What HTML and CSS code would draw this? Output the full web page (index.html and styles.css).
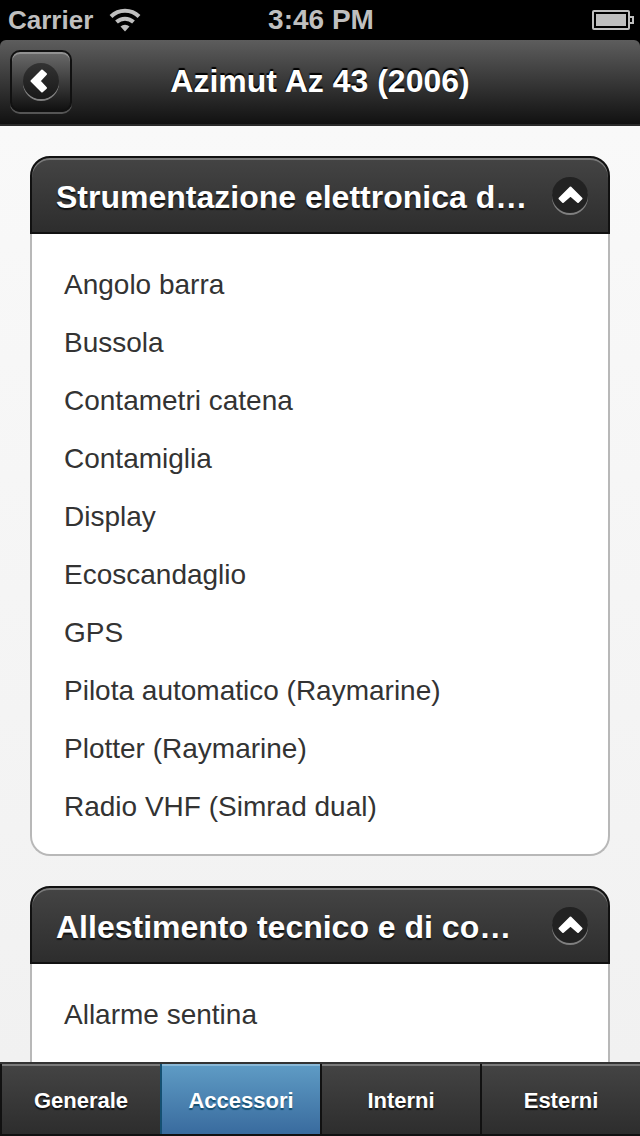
FILE: index.html
```html
<!DOCTYPE html>
<html lang="it">

<head>
    <meta charset="UTF-8">
    <meta name="viewport" content="width=device-width, initial-scale=1.0">
    <title>Azimut Az 43 (2006)</title>
    <link rel="stylesheet" href="styles.css">
</head>

<body>
    <div class="status-bar">
        <div class="status-left">
            <span class="carrier">Carrier</span>
            <svg class="wifi" width="32" height="24" viewBox="0 0 32 24" aria-hidden="true">
                <g fill="none" stroke="#bfbfbf" stroke-width="4">
                    <path d="M2 8.500 A20 20 0 0 1 30 8.500" />
                    <path d="M7.500 14 A12.500 12.500 0 0 1 24.500 14" />
                </g>
                <path d="M11.500 18.500 A6.500 6.500 0 0 1 20.500 18.500 L16 23.500 Z" fill="#bfbfbf" />
            </svg>
        </div>
        <span class="clock">3:46 PM</span>
        <div class="status-right">
            <svg width="42" height="20" viewBox="0 0 42 20" aria-hidden="true">
                <rect x="1" y="1" width="36" height="18" rx="1" fill="none" stroke="#bfbfbf" stroke-width="2" />
                <rect x="4" y="4" width="30" height="12" fill="#bfbfbf" />
                <path d="M38 7 H41 V13 H38" fill="none" stroke="#bfbfbf" stroke-width="2" />
            </svg>
        </div>
    </div>

    <header class="page-header">
        <button type="button" class="back-btn" aria-label="Indietro">
            <span class="icon">
                <svg width="36" height="36" viewBox="0 0 36 36">
                    <path d="M8.500 18 L19 7.500 L23 11 L16.500 18 L23 25 L19 28.500 Z" />
                </svg>
            </span>
        </button>
        <h1>Azimut Az 43 (2006)</h1>
    </header>

    <main class="content">
        <section class="collapsible">
            <h2>
                <button type="button" class="toggle" aria-expanded="true">
                    <span class="toggle-text">Strumentazione elettronica di bordo</span>
                    <span class="icon">
                        <svg width="36" height="36" viewBox="0 0 36 36">
                            <path d="M18.500 10.500 L29.500 21.500 L26 25 L18.500 18.500 L11 25 L7.500 21.500 Z" />
                        </svg>
                    </span>
                </button>
            </h2>
            <ul class="items">
                <li>Angolo barra</li>
                <li>Bussola</li>
                <li>Contametri catena</li>
                <li>Contamiglia</li>
                <li>Display</li>
                <li>Ecoscandaglio</li>
                <li>GPS</li>
                <li>Pilota automatico (Raymarine)</li>
                <li>Plotter (Raymarine)</li>
                <li>Radio VHF (Simrad dual)</li>
            </ul>
        </section>

        <section class="collapsible">
            <h2>
                <button type="button" class="toggle" aria-expanded="true">
                    <span class="toggle-text">Allestimento tecnico e di coperta</span>
                    <span class="icon">
                        <svg width="36" height="36" viewBox="0 0 36 36">
                            <path d="M18.500 10.500 L29.500 21.500 L26 25 L18.500 18.500 L11 25 L7.500 21.500 Z" />
                        </svg>
                    </span>
                </button>
            </h2>
            <ul class="items">
                <li>Allarme sentina</li>
                <li>Autoclave</li>
            </ul>
        </section>
    </main>

    <nav class="tabs">
        <a href="#generale">Generale</a>
        <a href="#accessori" class="active">Accessori</a>
        <a href="#interni">Interni</a>
        <a href="#esterni">Esterni</a>
    </nav>
</body>

</html>
```
FILE: styles.css
```css
* {
    box-sizing: border-box;
}

body {
    margin: 0;
    height: 100vh;
    display: flex;
    flex-direction: column;
    background-color: #000;
    font-family: "Liberation Sans", Arial, Helvetica, sans-serif;
    color: #333;
}

h1,
h2 {
    margin: 0;
}

button {
    font-family: inherit;
    cursor: pointer;
}

/* status bar */
.status-bar {
    flex: none;
    height: 40px;
    padding: 0 6px 0 8px;
    display: grid;
    grid-template-columns: 1fr auto 1fr;
    align-items: center;
    color: #bfbfbf;
    font-size: 28px;
    font-weight: bold;
}

.status-left {
    display: flex;
    align-items: center;
    gap: 16px;
}

.status-right {
    display: flex;
    justify-content: flex-end;
}

.carrier {
    font-size: 26px;
}

/* header */
.page-header {
    flex: none;
    padding: 10px 10px 12px;
    display: grid;
    grid-template-columns: 62px 1fr 62px;
    background: linear-gradient(#5d5d5d, #111);
    border-bottom: 2px solid #2a2a2a;
    border-radius: 6px 6px 0 0;
}

.page-header h1 {
    text-align: center;
    font-size: 32px;
    line-height: 62px;
    color: #fff;
    text-shadow: 0 -2px 1px #000;
}

.back-btn {
    width: 62px;
    height: 62px;
    padding: 0;
    display: flex;
    align-items: center;
    justify-content: center;
    background: linear-gradient(#6b6b6b, #111);
    border: 2px solid #111;
    border-radius: 10px;
    box-shadow: inset 0 2px 0 #929292, 0 2px 0 #555;
}

.icon {
    flex: none;
    width: 36px;
    height: 36px;
    border-radius: 50%;
    background-color: #222;
    box-shadow: 0 2px 0 #808080;
}

.back-btn .icon {
    background: linear-gradient(#333, #181818);
}

.icon svg {
    display: block;
    fill: #fff;
    stroke: #fff;
    stroke-width: 2;
    stroke-linejoin: round;
}

/* content */
.content {
    flex: 1;
    min-height: 0;
    overflow: hidden;
    padding: 30px;
    display: flex;
    flex-direction: column;
    gap: 30px;
    background: linear-gradient(#f9f9f9, #f1f1f1);
}

.collapsible {
    flex: none;
}

.toggle {
    width: 100%;
    height: 78px;
    padding: 0 20px 0 24px;
    display: flex;
    align-items: center;
    gap: 24px;
    background: linear-gradient(#444, #2d2d2d);
    border: 2px solid #111;
    border-radius: 20px 20px 0 0;
    box-shadow: inset 0 2px 0 #7a7a7a;
    color: #fff;
    font-size: 32px;
    font-weight: bold;
    line-height: 42px;
    text-align: left;
    text-shadow: 0 2px 1px #111;
}

.toggle-text {
    flex: 1;
    min-width: 0;
    padding-top: 4px;
    overflow: hidden;
    text-overflow: ellipsis;
    white-space: nowrap;
}

.items {
    margin: 0;
    padding: 22px 32px 18px;
    list-style: none;
    background-color: #fff;
    border: 2px solid #b8b8b8;
    border-top: none;
    border-radius: 0 0 20px 20px;
}

.items li {
    font-size: 28px;
    line-height: 58px;
}

/* tabs */
.tabs {
    flex: none;
    display: grid;
    grid-template-columns: repeat(4, 1fr);
    border-top: 2px solid #333;
    border-bottom: 2px solid #111;
}

.tabs a {
    height: 70px;
    padding-top: 4px;
    display: flex;
    align-items: center;
    justify-content: center;
    border-left: 2px solid #111;
    background: linear-gradient(#444, #2d2d2d);
    box-shadow: inset 0 2px 0 #7a7a7a;
    color: #fff;
    font-size: 22px;
    font-weight: bold;
    text-decoration: none;
    text-shadow: 0 2px 1px #111;
}

.tabs .active {
    border-left-color: #145072;
    background: linear-gradient(#5f9cc5, #396b9e);
    box-shadow: inset 0 2px 0 #8ab8d6;
    text-shadow: 0 2px 1px #145072;
}
```
